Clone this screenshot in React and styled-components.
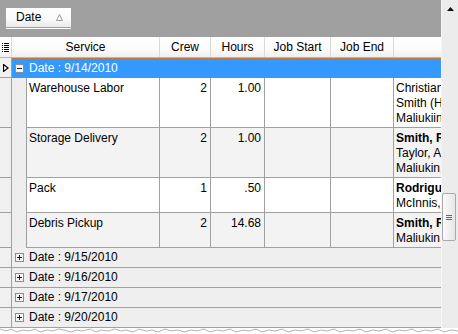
import styled, { createGlobalStyle } from "styled-components";

const GlobalStyle = createGlobalStyle`
  html, body {
    margin: 0;
    padding: 0;
    background: #fff;
  }
  body {
    font-family: "Liberation Sans", Arial, sans-serif;
    font-size: 12px;
    color: #000;
  }
`;

const LINE = '#a0a0a0';

const jobs = [
  { service: 'Warehouse Labor', crew: 2, hours: '1.00', names: [{ text: 'Christian' }, { text: 'Smith (Helper)' }, { text: 'Maliukiin, Ivan' }] },
  { service: 'Storage Delivery', crew: 2, hours: '1.00', names: [{ text: 'Smith, Robert', bold: true }, { text: 'Taylor, Adam' }, { text: 'Maliukin, Ivan' }] },
  { service: 'Pack', crew: 1, hours: '.50', names: [{ text: 'Rodriguez, Luis', bold: true }, { text: 'McInnis, Dan' }] },
  { service: 'Debris Pickup', crew: 2, hours: '14.68', names: [{ text: 'Smith, Robert', bold: true }, { text: 'Maliukin, Ivan' }] },
];

const closedGroups = ['9/15/2010', '9/16/2010', '9/17/2010', '9/20/2010'];

const ListIcon = () => (
  <svg width="7" height="9" viewBox="0 0 7 9">
    {[0, 2, 4, 6, 8].map(y => (
      <g key={y} fill="#000">
        <rect x="0" y={y} width="1" height="1" />
        <rect x="2" y={y} width="5" height="1" />
      </g>
    ))}
  </svg>
);

const RowArrow = () => (
  <svg width="6" height="8" viewBox="0 0 6 8">
    <path d="M0.5 0.5 L5 4 L0.5 7.5 Z" fill="#fff" stroke="#000" strokeWidth="1.2" />
  </svg>
);

const Expander = ({ open }) => (
  <ExpandBox>
    <svg width="9" height="9" viewBox="0 0 9 9">
      <rect x="0.5" y="0.5" width="8" height="8" fill="#f4f4f4" stroke="#8d8d8d" />
      <rect x="2" y="4" width="5" height="1" fill="#222" />
      {!open && <rect x="4" y="2" width="1" height="5" fill="#222" />}
    </svg>
  </ExpandBox>
);

const TornEdge = () => (
  <TornWrap>
    <svg width="458" height="6" viewBox="0 0 458 6">
      <path
        d="M0 1 L6 3 L11 1 L17 4 L22 2 L29 3 L35 1 L40 4 L47 2 L53 3 L58 1 L64 2 L71 4 L77 2 L82 3 L90 1 L96 4 L101 2 L108 3 L115 1 L121 3 L126 2 L133 4 L139 1 L146 3 L152 2 L158 4 L165 1 L171 3 L178 2 L184 4 L191 2 L197 3 L204 1 L210 4 L217 2 L223 3 L230 1 L236 4 L243 2 L249 3 L256 1 L262 4 L269 2 L275 3 L282 1 L288 4 L295 2 L301 3 L308 1 L314 4 L321 2 L327 3 L334 1 L340 4 L347 2 L353 3 L360 1 L366 4 L373 2 L379 3 L386 1 L392 4 L399 2 L405 3 L412 1 L418 4 L425 2 L431 3 L438 1 L444 4 L451 2 L458 3"
        fill="none"
        stroke="#b4b4b4"
        strokeWidth="1"
      />
    </svg>
  </TornWrap>
);

const App = () => {
  return (
    <Page>
      <GlobalStyle />
      <Frame>
        <Main>
          <GroupPanel>
            <GroupButton>
              Date
              <svg width="7" height="7" viewBox="0 0 7 7">
                <path d="M3.5 0.5 L6.5 6.5 L0.5 6.5 Z" fill="none" stroke="#9a9a9a" />
              </svg>
            </GroupButton>
          </GroupPanel>

          <HeaderRow>
            <HeaderCell $w={12}><ListIcon /></HeaderCell>
            <HeaderCell $w={148}>Service</HeaderCell>
            <HeaderCell $w={51}>Crew</HeaderCell>
            <HeaderCell $w={54}>Hours</HeaderCell>
            <HeaderCell $w={66}>Job Start</HeaderCell>
            <HeaderCell $w={63}>Job End</HeaderCell>
            <HeaderCell $w={48} $last />
          </HeaderRow>

          <GroupRow>
            <IndicatorCell><RowArrow /></IndicatorCell>
            <GroupBody $selected>
              <Expander open />
              Date : 9/14/2010
            </GroupBody>
          </GroupRow>

          {jobs.map((job, i) => (
            <DetailRow key={job.service}>
              <IndicatorCell />
              <IndentCell />
              <DataCells $alt={i % 2 === 1}>
                <Cell $w={133}>{job.service}</Cell>
                <Cell $w={51} $right>{job.crew}</Cell>
                <Cell $w={54} $right>{job.hours}</Cell>
                <Cell $w={66} />
                <Cell $w={63} />
                <Cell $w={48} $last>
                  {job.names.map(n => (
                    <NameLine key={n.text} $bold={n.bold}>{n.text}</NameLine>
                  ))}
                </Cell>
              </DataCells>
            </DetailRow>
          ))}

          {closedGroups.map(d => (
            <GroupRow key={d}>
              <IndicatorCell />
              <GroupBody>
                <Expander />
                Date : {d}
              </GroupBody>
            </GroupRow>
          ))}
        </Main>

        <ScrollBar>
          <ScrollArrow>
            <svg width="7" height="4" viewBox="0 0 7 4">
              <path d="M3.5 0 L7 4 L0 4 Z" fill="#111" />
            </svg>
          </ScrollArrow>
          <Thumb>
            <Grip />
            <Grip />
            <Grip />
          </Thumb>
        </ScrollBar>
      </Frame>
      <TornEdge />
    </Page>
  );
};

const Page = styled.div`
  width: 458px;
  height: 334px;
  overflow: hidden;
  display: flex;
  flex-direction: column;
`;

const Frame = styled.div`
  display: flex;
  height: 328px;
`;

const Main = styled.div`
  width: 442px;
  display: flex;
  flex-direction: column;
  overflow: hidden;
`;

const GroupPanel = styled.div`
  height: 37px;
  box-sizing: border-box;
  background: #a0a0a0;
  padding: 8px 0 0 6px;
`;

const GroupButton = styled.div`
  width: 65px;
  height: 19px;
  box-sizing: border-box;
  padding: 0 8px 0 10px;
  display: flex;
  align-items: center;
  justify-content: space-between;
  background: linear-gradient(#ffffff 0%, #fbfbfb 55%, #eaeaea 100%);
  box-shadow: 0 1px 0 #a0a0a0, 0 2px 0 #ffffff;
  line-height: 19px;
`;

const HeaderRow = styled.div`
  display: flex;
  height: 21px;
  box-sizing: border-box;
  background: linear-gradient(#ffffff 0%, #fcfcfc 60%, #efefef 100%);
  border-bottom: 1px solid #b8b8b8;
`;

const HeaderCell = styled.div`
  width: ${p => p.$w}px;
  flex: none;
  box-sizing: border-box;
  display: flex;
  align-items: center;
  justify-content: center;
  border-right: ${p => (p.$last ? 'none' : '1px solid #dadada')};
  line-height: 20px;
  white-space: nowrap;
`;

const GroupRow = styled.div`
  display: flex;
  height: 20px;
  box-sizing: border-box;
`;

const IndicatorCell = styled.div`
  width: 12px;
  flex: none;
  box-sizing: border-box;
  background: #f0f0f0;
  border-right: 1px solid ${LINE};
  border-bottom: 1px solid ${LINE};
  display: flex;
  align-items: center;
  justify-content: center;
`;

const GroupBody = styled.div`
  flex: 1;
  box-sizing: border-box;
  display: flex;
  align-items: center;
  padding-left: 2px;
  line-height: 19px;
  white-space: nowrap;
  color: ${p => (p.$selected ? '#fff' : '#000')};
  background: ${p => (p.$selected ? '#3399ff' : '#efefef')};
  border: ${p => (p.$selected ? '1px dotted #c27a3e' : 'none')};
  border-bottom: ${p => (p.$selected ? '1px dotted #c27a3e' : `1px solid ${LINE}`)};
  padding-left: ${p => (p.$selected ? '2px' : '3px')};
`;

const ExpandBox = styled.span`
  display: inline-flex;
  width: 9px;
  height: 9px;
  margin-right: 5px;
`;

const DetailRow = styled.div`
  display: flex;
`;

const IndentCell = styled.div`
  width: 15px;
  flex: none;
  box-sizing: border-box;
  background: #eeeeee;
  border-right: 1px solid ${LINE};
`;

const DataCells = styled.div`
  display: flex;
  flex: 1;
  background: ${p => (p.$alt ? '#f3f3f3' : '#fff')};
  border-bottom: 1px solid ${LINE};
`;

const Cell = styled.div`
  width: ${p => p.$w}px;
  flex: none;
  box-sizing: border-box;
  padding: 3px 3px 1px ${p => (p.$right ? '0' : '2px')};
  text-align: ${p => (p.$right ? 'right' : 'left')};
  line-height: 15px;
  border-right: ${p => (p.$last ? 'none' : `1px solid ${LINE}`)};
  white-space: nowrap;
  overflow: hidden;
`;

const NameLine = styled.div`
  font-weight: ${p => (p.$bold ? 'bold' : 'normal')};
  height: 15px;
`;

const ScrollBar = styled.div`
  width: 16px;
  flex: none;
  background: #ececec;
  border-left: 1px solid #f6f6f6;
  display: flex;
  flex-direction: column;
`;

const ScrollArrow = styled.div`
  height: 16px;
  display: flex;
  justify-content: center;
  padding-top: 7px;
  box-sizing: border-box;
`;

const Thumb = styled.div`
  margin: 177px 0 0 0;
  width: 14px;
  height: 48px;
  box-sizing: border-box;
  border: 1px solid #a9a9a9;
  border-radius: 2px;
  background: linear-gradient(90deg, #fafafa, #e6e6e6);
  display: flex;
  flex-direction: column;
  align-items: center;
  justify-content: center;
  gap: 1px;
`;

const Grip = styled.div`
  width: 6px;
  height: 1px;
  background: #666;
`;

const TornWrap = styled.div`
  height: 6px;
  line-height: 0;
`;

export default App;
